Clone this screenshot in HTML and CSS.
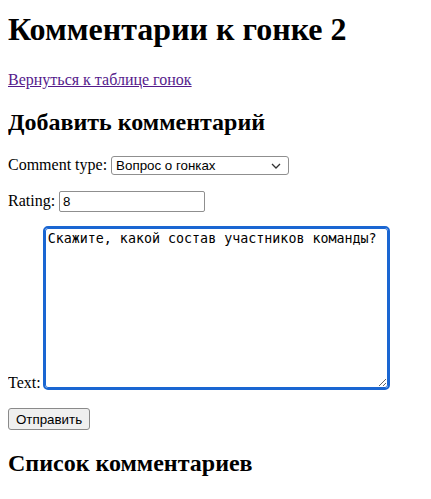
FILE: index.html
```html
<!DOCTYPE html>
<html lang="ru">
<head>
<meta charset="utf-8">
<title>Комментарии к гонке 2</title>
<link rel="stylesheet" href="styles.css">
</head>
<body class="page">
<h1 class="title">Комментарии к гонке 2</h1>
<p class="para"><a class="back" href="#">Вернуться к таблице гонок</a></p>
<h2 class="subtitle">Добавить комментарий</h2>
<form class="form">
<p class="para"><label>Comment type: <select class="select"><option>Вопрос о гонках</option></select></label></p>
<p class="para"><label>Rating: <input class="input" type="text" value="8"></label></p>
<p class="para"><label>Text: <textarea class="textarea">Скажите, какой состав участников команды?</textarea></label></p>
<button class="button" type="button">Отправить</button>
</form>
<h2 class="subtitle">Список комментариев</h2>
</body>
</html>
```
FILE: styles.css
```css
.page {
  margin: 0 8px 8px;
  font-family: "Liberation Serif", serif;
  font-size: 16px;
  color: #000;
  background: #fff;
}
.title { font-size: 32px; margin: 11px 0 23.44px; }
.subtitle { font-size: 24px; margin: 19.92px 0; }
.para { margin: 16px 0; }
.back { color: #551a8b; }
.select, .input, .button {
  font-family: "Liberation Sans", Arial, sans-serif;
  font-size: 13.33px;
  color: #000;
}
.select {
  -webkit-appearance: none;
  appearance: none;
  width: 178px;
  height: 19px;
  box-sizing: border-box;
  padding: 0 20px 0 4px;
  border: 1px solid #8f8f8f;
  border-radius: 3px;
  background: #fff url("data:image/svg+xml,%3Csvg xmlns='http://www.w3.org/2000/svg' width='10' height='6' viewBox='0 0 10 6'%3E%3Cpath d='M1 1l4 4 4-4' fill='none' stroke='%23333' stroke-width='1.3'/%3E%3C/svg%3E") no-repeat right 7px center;
  line-height: 17px;
}
.input {
  width: 146px;
  height: 21px;
  box-sizing: border-box;
  padding: 1px 3px;
  border: 1px solid #8f8f8f;
  border-radius: 2px;
}
.textarea {
  font-family: "DejaVu Sans Mono", monospace;
  font-size: 13.33px;
  width: 337px;
  height: 154px;
  padding: 2px;
  outline: 2px solid #1a66d2;
  outline-offset: 0;
  border: 1px solid #1a66d2;
  border-radius: 3px;
  vertical-align: baseline;
}
.button {
  height: 22px;
  padding: 1px 7px;
  background: #efefef;
  border: 1px solid #8a8a8a;
  border-radius: 3px;
}
```
